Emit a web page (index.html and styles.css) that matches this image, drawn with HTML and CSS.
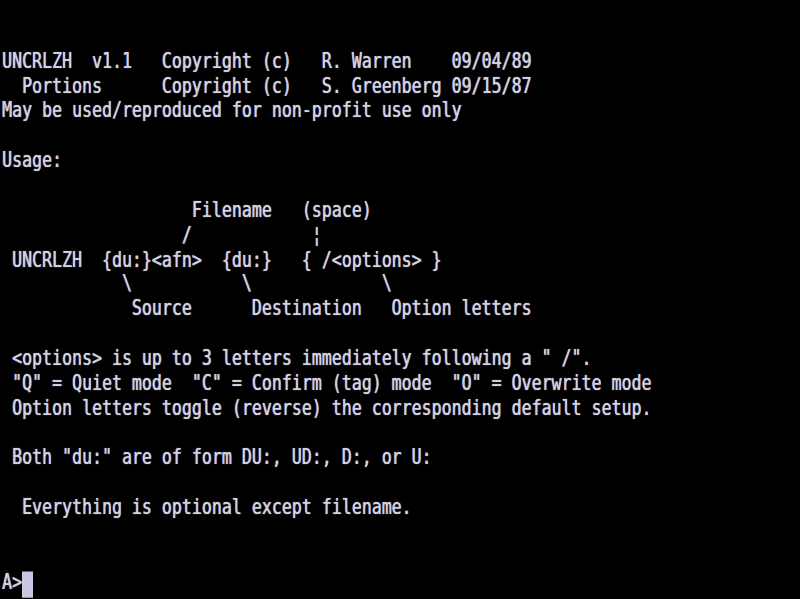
FILE: index.html
```html
<!DOCTYPE html>
<html>
<head>
<meta charset="utf-8">
<title>UNCRLZH</title>
<link rel="stylesheet" href="styles.css">
</head>
<body class="crt">
<pre class="screen">


UNCRLZH  v1.1   Copyright (c)   R. Warren    09/04/89
  Portions      Copyright (c)   S. Greenberg 09/15/87
May be used/reproduced for non-profit use only

Usage:

                   Filename   (space)
                  /            ¦
 UNCRLZH  {du:}&lt;afn&gt;  {du:}   { /&lt;options&gt; }
            \           \             \
             Source      Destination   Option letters

 &lt;options&gt; is up to 3 letters immediately following a " /".
 "Q" = Quiet mode  "C" = Confirm (tag) mode  "O" = Overwrite mode
 Option letters toggle (reverse) the corresponding default setup.

 Both "du:" are of form DU:, UD:, D:, or U:

  Everything is optional except filename.


A&gt;<span class="cursor"></span></pre>
</body>
</html>
```

FILE: styles.css
```css
html, body {
  margin: 0;
  padding: 0;
  background: #000;
  width: 800px;
  height: 599px;
  overflow: hidden;
}

.screen {
  margin: 0;
  padding: 0 0 0 2px;
  font-family: "DejaVu Sans Mono", "Liberation Mono", monospace;
  font-size: 16.6px;
  line-height: 19.86px;
  color: #d2d2e6;
  text-shadow: 0 0 1px rgba(210, 210, 230, 0.8), 0.4px 0 0 rgba(210, 210, 230, 0.6);
  white-space: pre;
  transform: translateY(-1px) scaleY(1.25);
  transform-origin: 0 0;
}

.cursor {
  display: inline-block;
  width: 11px;
  height: 21.6px;
  background: #c8c8e0;
  vertical-align: -7.5px;
}
```
